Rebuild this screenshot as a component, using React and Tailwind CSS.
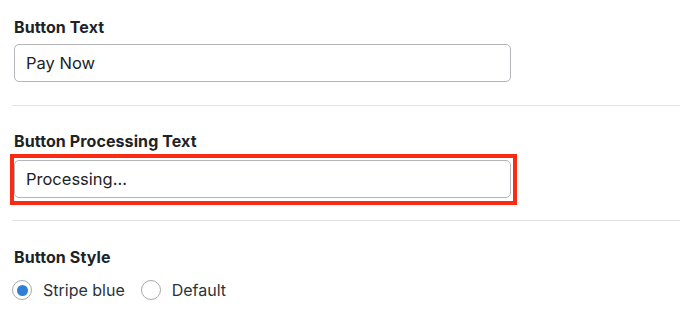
const Label = ({ children }) => (
	<div className="text-[16px] leading-[20px] font-bold text-[#1d2327] tracking-[0.1px]">{children}</div>
);

const TextInput = ({ value }) => (
	<input
		type="text"
		defaultValue={value}
		className="w-[497px] h-[38px] px-[11px] rounded-[5px] border border-[#b3b5b8] bg-white text-[16.5px] text-[#1d2327] outline-none"
	/>
);

const Radio = ({ checked, label }) => (
	<label className="flex items-center gap-[11px]">
		<span className="w-[20px] h-[20px] rounded-full border border-[#a7aaad] bg-white flex items-center justify-center">
			{checked && <span className="w-[11px] h-[11px] rounded-full bg-[#2f7ed8]" />}
		</span>
		<span className="text-[16px] text-[#2c3338]">{label}</span>
	</label>
);

export default function App() {
	return (
		<div
			className="w-[680px] h-[316px] bg-white overflow-hidden"
			style={{ fontFamily: "Inter, 'Noto Sans', sans-serif" }}
		>
			<div className="pl-[14px] pt-[17px]">
				<Label>Button Text</Label>
				<div className="mt-[7px]">
					<TextInput value="Pay Now" />
				</div>
			</div>
			<div className="ml-[12px] mt-[23px] h-px bg-[#e2e3e5]" />

			<div className="pl-[14px] pt-[25px]">
				<Label>Button Processing Text</Label>
				<div className="-ml-[4px] mt-[3px] w-[507px] h-[51px] border-4 border-[#fb2a12] pt-[2px]">
					<TextInput value="Processing..." />
				</div>
			</div>
			<div className="ml-[12px] mt-[15px] h-px bg-[#e2e3e5]" />

			<div className="pl-[12px] pt-[26px]">
				<div className="pl-[2px]">
					<Label>Button Style</Label>
				</div>
				<div className="mt-[11px] flex items-center gap-[16px]">
					<Radio checked label="Stripe blue" />
					<Radio label="Default" />
				</div>
			</div>
		</div>
	);
}
